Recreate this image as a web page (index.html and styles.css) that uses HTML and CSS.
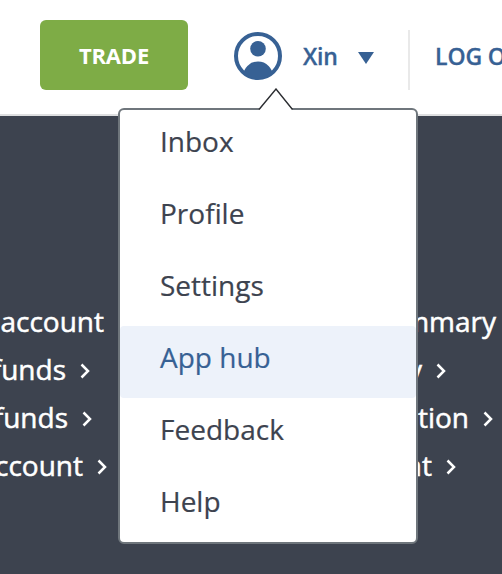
FILE: index.html
```html
<!DOCTYPE html>
<html lang="en">
<head>
<meta charset="utf-8">
<title>Account menu</title>
<link rel="stylesheet" href="styles.css">
</head>
<body>
<header class="header">
  <button class="trade">TRADE</button>
  <div class="account">
    <svg class="avatar" width="48" height="48" viewBox="0 0 48 48">
      <defs><clipPath id="disc"><circle cx="24" cy="24" r="23"/></clipPath></defs>
      <circle cx="24" cy="24" r="22" fill="none" stroke="#376194" stroke-width="4"/>
      <circle cx="24" cy="16.8" r="7.8" fill="#376194"/>
      <ellipse cx="24" cy="44.5" rx="15" ry="15" fill="#376194" clip-path="url(#disc)"/>
    </svg>
    <span class="name">Xin</span>
    <svg class="caret" width="16" height="12" viewBox="0 0 16 12"><path d="M0 0H16L8 12Z" fill="#376194"/></svg>
  </div>
  <a class="logout">LOG OUT</a>
  <nav class="menu">
    <svg class="pointer" width="36" height="23" viewBox="0 0 36 23"><path d="M1 22L18 1L34.500 22V23H1Z" fill="#fff"/><path d="M1 21.500L18 1L34.500 21.500" fill="none" stroke="#2b2d31" stroke-width="1.400"/></svg>
    <a class="item">Inbox</a>
    <a class="item">Profile</a>
    <a class="item">Settings</a>
    <a class="item active">App hub</a>
    <a class="item">Feedback</a>
    <a class="item">Help</a>
  </nav>
</header>
<main class="links">
  <ul class="column left">
    <li class="r1">account</li>
    <li class="r2">funds<svg class="chev" viewBox="0 0 10 16"><path d="M1.500 1.500L8 8L1.500 14.500"/></svg></li>
    <li class="r3">funds<svg class="chev" viewBox="0 0 10 16"><path d="M1.500 1.500L8 8L1.500 14.500"/></svg></li>
    <li class="r4">account<svg class="chev" viewBox="0 0 10 16"><path d="M1.500 1.500L8 8L1.500 14.500"/></svg></li>
  </ul>
  <ul class="column right">
    <li class="r1">summary</li>
    <li class="r2">y<svg class="chev" viewBox="0 0 10 16"><path d="M1.500 1.500L8 8L1.500 14.500"/></svg></li>
    <li class="r3">tion<svg class="chev" viewBox="0 0 10 16"><path d="M1.500 1.500L8 8L1.500 14.500"/></svg></li>
    <li class="r4">nt<svg class="chev" viewBox="0 0 10 16"><path d="M1.500 1.500L8 8L1.500 14.500"/></svg></li>
  </ul>
</main>
</body>
</html>
```

FILE: styles.css
```css
* { box-sizing: border-box; }
body {
  margin: 0;
  width: 502px;
  height: 574px;
  overflow: hidden;
  background: #3d434f;
  font-family: "Open Sans", sans-serif;
  display: flex;
  flex-direction: column;
}
.header {
  position: relative;
  flex: none;
  height: 116px;
  background: #fff;
  border-bottom: 2px solid #dedfe0;
  display: flex;
  align-items: flex-start;
  padding: 20px 0 0 40px;
  color: #376194;
  font-size: 23px;
  font-weight: 600;
}
.trade {
  width: 148px;
  height: 70px;
  flex: none;
  border: 0;
  border-radius: 6px;
  background: #7eac46;
  color: #fff;
  font: 700 22px "Open Sans", sans-serif;
  letter-spacing: -0.2px;
  padding: 0;
}
.account {
  flex: none;
  display: flex;
  align-items: center;
  width: 222px;
  height: 60px;
  padding: 0 0 8px 46px;
  margin-top: 10px;
  border-right: 2px solid #e9e9e9;
}
.avatar { flex: none; overflow: visible; }
.name {
  width: 63px;
  margin: 0 0 1px 21px;
  flex: none;
  letter-spacing: -0.2px;
  -webkit-text-stroke: 0.3px currentColor;
}
.caret { margin: 3px 0 0 -8px; flex: none; }
.logout {
  flex: none;
  width: 92px;
  overflow: hidden;
  padding: 20px 0 0 25px;
  line-height: 32px;
  white-space: nowrap;
  letter-spacing: -0.1px;
  -webkit-text-stroke: 0.3px currentColor;
}
.menu {
  position: absolute;
  z-index: 2;
  left: 118px;
  top: 108px;
  width: 300px;
  height: 436px;
  background: #fff;
  border: 2px solid #6f767c;
  border-radius: 6px;
}
.pointer { position: absolute; left: 138px; top: -22px; }
.item {
  display: block;
  height: 72px;
  padding-left: 40px;
  line-height: 62px;
  font-size: 28px;
  font-weight: 400;
  color: #3d434f;
  -webkit-text-stroke: 0.2px currentColor;
}
.active { background: #edf2fa; color: #376194; border-radius: 4px; }
.links { display: flex; justify-content: space-between; padding-top: 181px; }
.column {
  list-style: none;
  margin: 0;
  padding: 0;
  width: 120px;
  color: #fff;
  font-size: 28px;
  -webkit-text-stroke: 0.5px #fff;
}
.column li { height: 48px; display: flex; justify-content: flex-end; align-items: center; white-space: nowrap; }
.chev { width: 10px; height: 16px; margin: 3px 0 0 14px; flex: none; fill: none; stroke: #fff; stroke-width: 2.5; }
.left .r1 { padding-right: 16px; }
.left .r2 { padding-right: 30px; }
.left .r3 { padding-right: 28px; }
.left .r4 { padding-right: 13px; }
.right .r1 { padding-right: 6px; }
.right .r2 { padding-right: 56px; }
.right .r3 { padding-right: 9px; }
.right .r4 { padding-right: 46px; }
```
